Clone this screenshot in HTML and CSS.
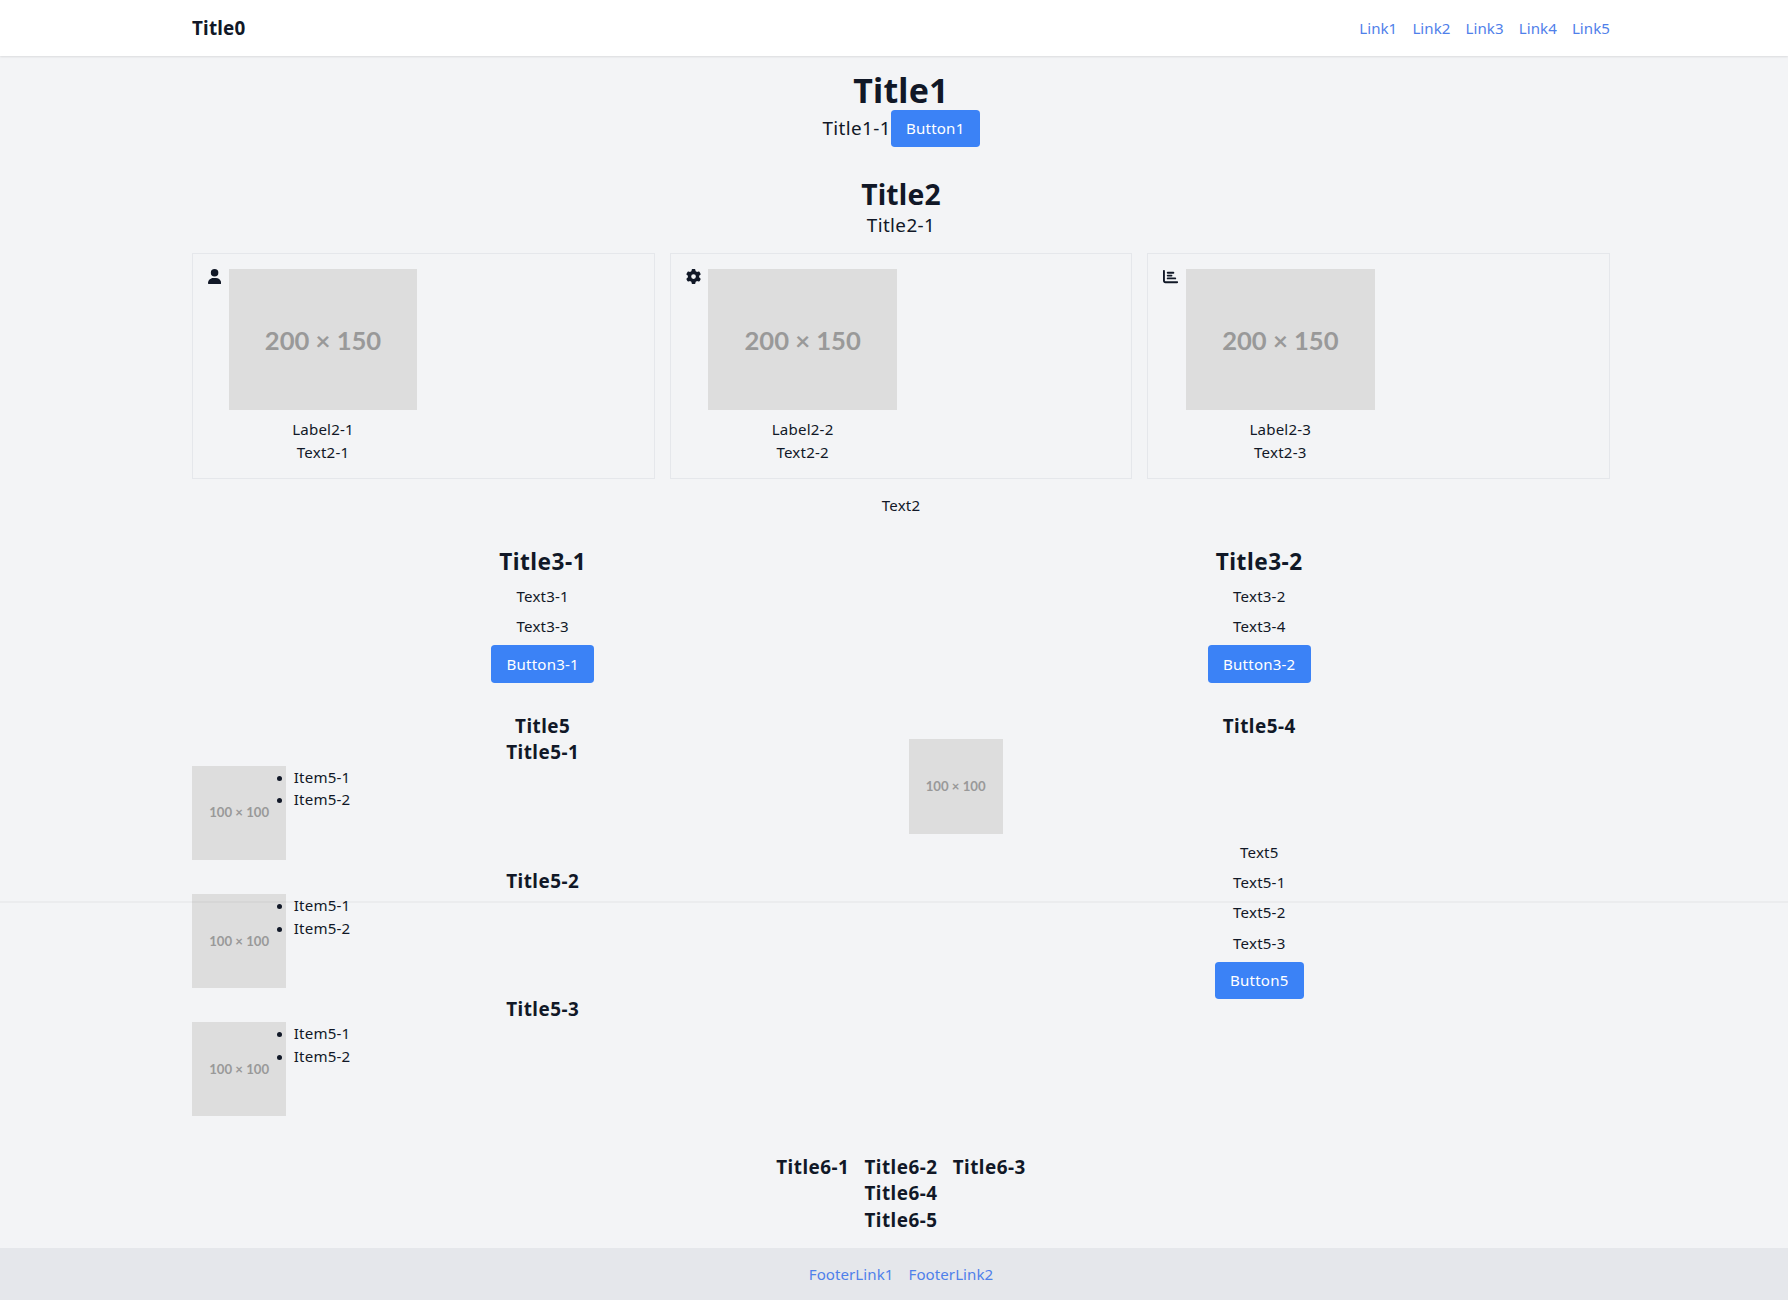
FILE: index.html
```html
<!DOCTYPE html>
<html lang="en">
<head>
<meta charset="utf-8">
<title>Title0</title>
<link rel="stylesheet" href="styles.css">
</head>
<body>
<header class="header">
  <div class="container header-row">
    <h1 class="brand">Title0</h1>
    <nav class="links"><a>Link1</a><a>Link2</a><a>Link3</a><a>Link4</a><a>Link5</a></nav>
  </div>
</header>
<div class="fold-line"></div>
<main class="container main">
  <section class="section">
    <h2 class="title-xl">Title1</h2>
    <div class="hero-row"><span class="subtitle">Title1-1</span><button class="button">Button1</button></div>
  </section>
  <section class="section">
    <h2 class="title-lg">Title2</h2>
    <p class="subtitle">Title2-1</p>
    <div class="cards">
      <article class="card">
        <svg class="icon icon-user" viewBox="0 0 448 512"><path d="M224 256A128 128 0 1 0 224 0a128 128 0 1 0 0 256zm-45.7 48C79.800 304 0 383.800 0 482.300 0 498.700 13.300 512 29.700 512H418.300c16.400 0 29.700-13.300 29.700-29.700C448 383.800 368.200 304 269.700 304z"/></svg>
        <div><div class="photo">200 × 150</div><p class="label">Label2-1</p><p>Text2-1</p></div>
      </article>
      <article class="card">
        <svg class="icon" viewBox="0 0 512 512"><path d="M495.900 166.600c3.200 8.700.5 18.400-6.400 24.600l-43.300 39.400c1.100 8.300 1.700 16.800 1.700 25.400s-.6 17.100-1.700 25.400l43.300 39.400c6.900 6.200 9.600 15.900 6.400 24.600-4.400 11.900-9.700 23.300-15.800 34.300l-4.700 8.100c-6.600 11-14 21.400-22.100 31.200-5.900 7.200-15.700 9.600-24.500 6.800l-55.700-17.700c-13.400 10.300-28.200 18.900-44 25.400l-12.500 57.100c-2 9.100-9 16.300-18.200 17.800-13.800 2.300-28 3.500-42.500 3.500s-28.700-1.200-42.500-3.500c-9.200-1.500-16.200-8.700-18.200-17.800l-12.500-57.100c-15.800-6.500-30.600-15.100-44-25.400l-55.600 17.800c-8.800 2.800-18.600.3-24.500-6.800-8.100-9.800-15.500-20.200-22.100-31.200l-4.700-8.100c-6.100-11-11.400-22.400-15.800-34.300-3.200-8.700-.5-18.400 6.400-24.600l43.300-39.400C64.600 273.100 64 264.600 64 256s.6-17.100 1.700-25.400L22.400 191.200c-6.900-6.200-9.600-15.900-6.400-24.600 4.400-11.900 9.700-23.300 15.800-34.300l4.700-8.100c6.600-11 14-21.400 22.100-31.200 5.900-7.200 15.700-9.600 24.500-6.800l55.700 17.700c13.400-10.300 28.200-18.900 44-25.400l12.500-57.100c2-9.100 9-16.300 18.200-17.800C227.300 1.200 241.500 0 256 0s28.700 1.200 42.500 3.500c9.200 1.500 16.200 8.700 18.200 17.800l12.500 57.100c15.800 6.500 30.600 15.100 44 25.400l55.700-17.700c8.800-2.800 18.600-.3 24.500 6.800 8.100 9.800 15.500 20.200 22.100 31.200l4.700 8.100c6.100 11 11.400 22.400 15.800 34.300zM256 336a80 80 0 1 0 0-160 80 80 0 1 0 0 160z"/></svg>
        <div><div class="photo">200 × 150</div><p class="label">Label2-2</p><p>Text2-2</p></div>
      </article>
      <article class="card">
        <svg class="icon" viewBox="0 0 512 512"><path d="M32 32c17.700 0 32 14.300 32 32V400c0 8.800 7.200 16 16 16H480c17.700 0 32 14.300 32 32s-14.300 32-32 32H80c-44.200 0-80-35.800-80-80V64C0 46.300 14.300 32 32 32zM160 96H352a32 32 0 0 1 0 64H160a32 32 0 0 1 0-64zm0 96H288a32 32 0 0 1 0 64H160a32 32 0 0 1 0-64zm0 96H416a32 32 0 0 1 0 64H160a32 32 0 0 1 0-64z"/></svg>
        <div><div class="photo">200 × 150</div><p class="label">Label2-3</p><p>Text2-3</p></div>
      </article>
    </div>
    <p class="cards-note">Text2</p>
  </section>
  <section class="section columns">
    <div class="stack"><h3 class="title-md">Title3-1</h3><p>Text3-1</p><p>Text3-3</p><button class="button">Button3-1</button></div>
    <div class="stack"><h3 class="title-md">Title3-2</h3><p>Text3-2</p><p>Text3-4</p><button class="button">Button3-2</button></div>
  </section>
  <section class="section columns">
    <div>
      <h3 class="title-sm">Title5</h3>
      <h4 class="title-sm">Title5-1</h4>
      <div class="media"><div class="thumb">100 × 100</div><ul class="items"><li>Item5-1</li><li>Item5-2</li></ul></div>
      <h4 class="title-sm">Title5-2</h4>
      <div class="media"><div class="thumb">100 × 100</div><ul class="items"><li>Item5-1</li><li>Item5-2</li></ul></div>
      <h4 class="title-sm">Title5-3</h4>
      <div class="media"><div class="thumb">100 × 100</div><ul class="items"><li>Item5-1</li><li>Item5-2</li></ul></div>
    </div>
    <div>
      <h3 class="title-sm">Title5-4</h3>
      <div class="stack"><div class="thumb thumb-start">100 × 100</div><p>Text5</p><p>Text5-1</p><p>Text5-2</p><p>Text5-3</p><button class="button">Button5</button></div>
    </div>
  </section>
  <section class="section summary">
    <h3 class="title-sm">Title6-1</h3>
    <div><h3 class="title-sm">Title6-2</h3><h3 class="title-sm">Title6-4</h3><h3 class="title-sm">Title6-5</h3></div>
    <h3 class="title-sm">Title6-3</h3>
  </section>
</main>
<footer class="footer">
  <div class="container links footer-links"><a>FooterLink1</a><a>FooterLink2</a></div>
</footer>
</body>
</html>
```
FILE: styles.css
```css
* { box-sizing: border-box; margin: 0; padding: 0; }
html { font-size: 15.08px; }
body {
  position: relative;
  height: 1300px;
  overflow: hidden;
  background: #f3f4f6;
  color: #111827;
  font-family: "Noto Sans", "Open Sans", sans-serif;
  line-height: 1.5;
  letter-spacing: .2px;
}
.container { width: 1418px; margin-left: 192px; }
.header {
  position: relative;
  height: 56px;
  padding-top: 14.8px;
  background: #fff;
  box-shadow: 0 1px 2px rgba(0, 0, 0, .1);
}
.main { padding-top: 1px; }
.header-row { display: flex; align-items: center; justify-content: space-between; }
.brand { font-size: 1.25rem; line-height: 1.75rem; }
.links { display: flex; gap: 1rem; color: #4f80ea; letter-spacing: .06px; }
.fold-line {
  position: absolute;
  z-index: 1;
  top: 901px;
  left: 0;
  right: 0;
  height: 2px;
  background: rgba(0, 0, 0, .03);
}
.section { padding: 1rem 0; text-align: center; }
.title-xl { font-size: 2.25rem; line-height: 2.5rem; }
.title-lg { font-size: 1.875rem; line-height: 2.25rem; }
.title-md { font-size: 1.5rem; line-height: 2rem; letter-spacing: .5px; }
.title-sm { font-size: 1.25rem; line-height: 1.75rem; letter-spacing: .5px; }
.subtitle { font-size: 1.25rem; line-height: 1.75rem; letter-spacing: .4px; }
.hero-row { display: flex; align-items: center; justify-content: center; }
.button {
  height: 2.5rem;
  padding: 0 1rem;
  border: 0;
  border-radius: .25rem;
  background: #3b82f6;
  color: #fff;
  font: inherit;
  letter-spacing: .2px;
}
.cards { display: grid; grid-template-columns: repeat(3, 1fr); gap: 1rem; margin-top: 1rem; }
.card { display: flex; align-items: flex-start; gap: .5rem; padding: 1rem; border: 1px solid #e5e7eb; }
.icon { width: 1rem; height: 1rem; fill: #111827; }
.icon-user { width: .875rem; }
.photo, .thumb {
  display: flex;
  align-items: center;
  justify-content: center;
  padding-top: 1px;
  background: #ddd;
  color: #999;
  font-family: Lato, sans-serif;
  font-weight: 700;
  letter-spacing: 0;
}
.photo { width: 12.5rem; height: 9.375rem; font-size: 25.6px; }
.thumb { width: 6.25rem; height: 6.25rem; font-size: 13.2px; }
.label { margin-top: .5rem; }
.cards-note { margin-top: 1rem; }
.columns { display: grid; grid-template-columns: 1fr 1fr; gap: 1rem; }
.stack { display: flex; flex-direction: column; align-items: center; gap: .5rem; }
.thumb-start { align-self: flex-start; }
.media { display: flex; gap: .5rem; margin-bottom: .5rem; }
.items { text-align: left; }
.summary { display: flex; justify-content: center; gap: 1rem; }
.footer { padding: 1rem 0; background: #e5e7eb; }
.footer-links { justify-content: center; }
```
